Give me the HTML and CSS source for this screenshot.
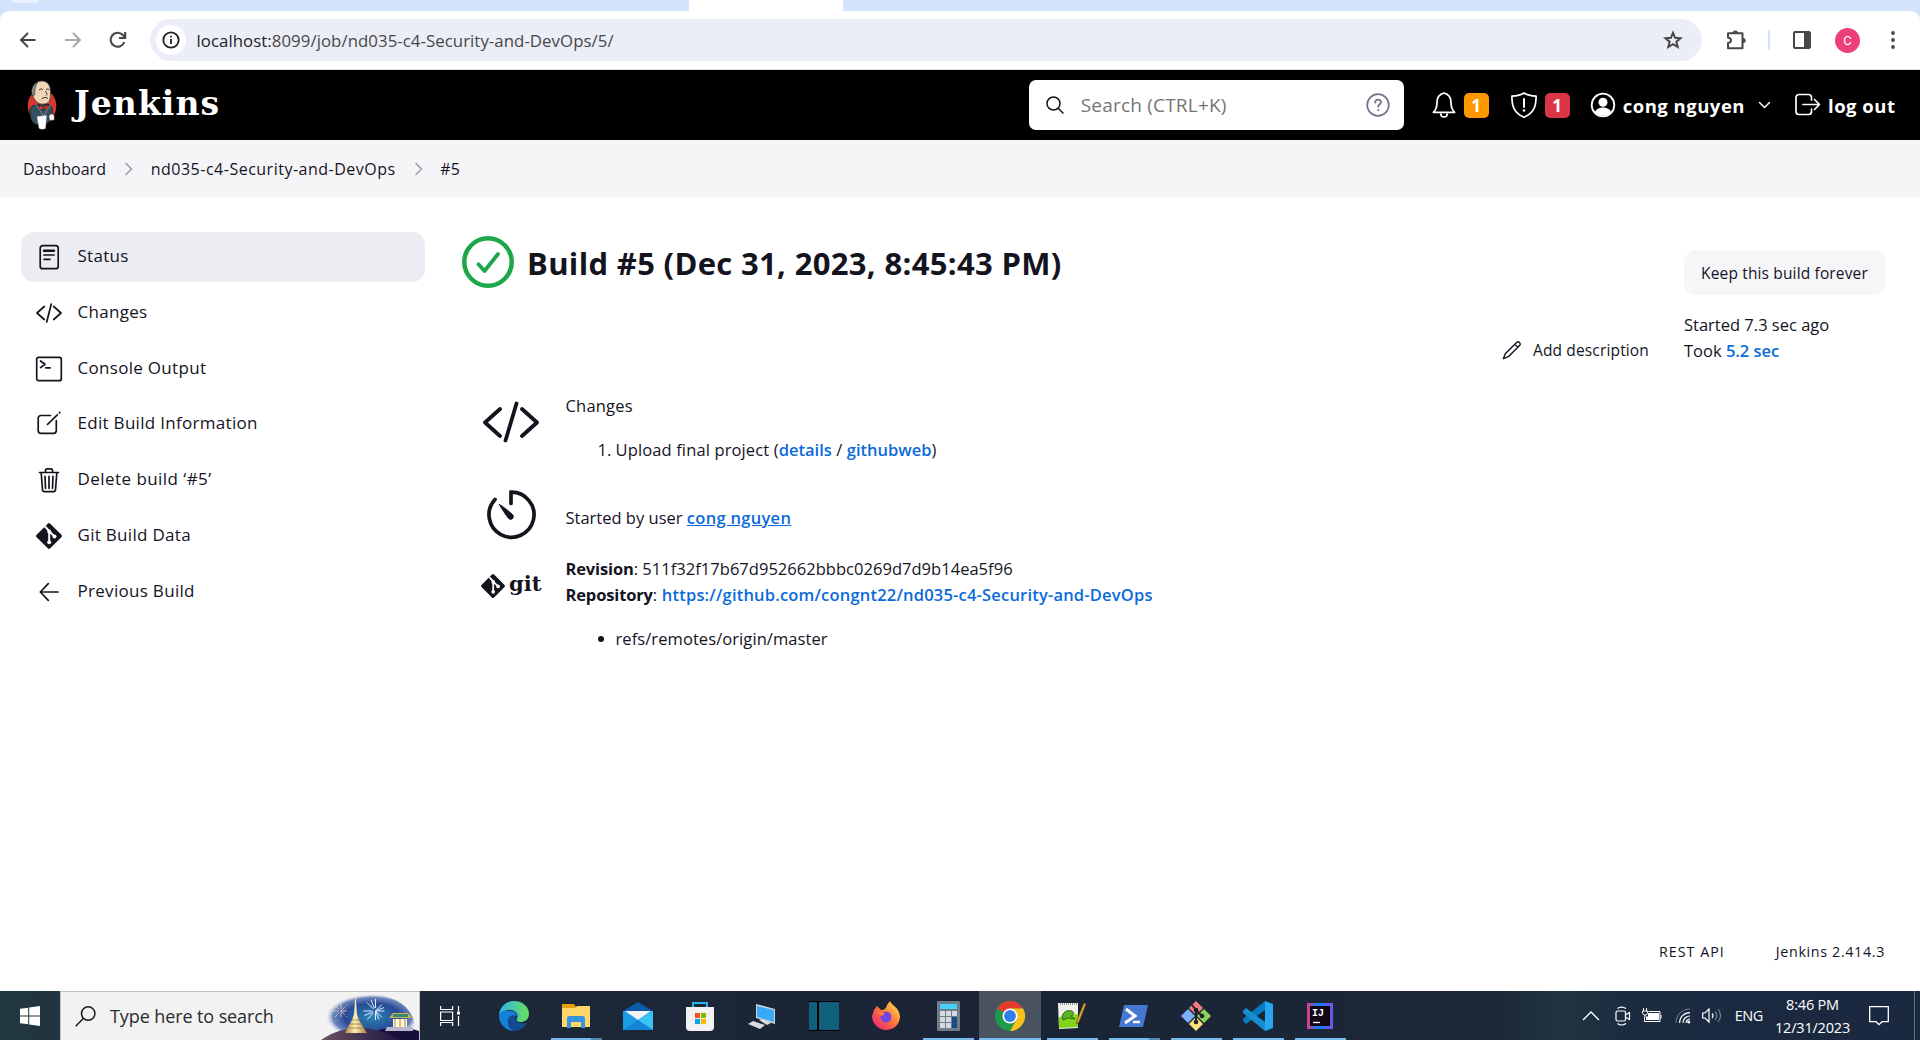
FILE: index.html
```html
<!DOCTYPE html>
<html lang="en">
<head>
<meta charset="utf-8">
<title>Build #5 - Jenkins</title>
<link rel="stylesheet" href="styles.css">
</head>
<body>
<div class="screen">
  <div class="tabstrip"><div class="tab-button"></div><div class="active-tab"></div></div>
  <div class="toolbar-back">
  <div class="toolbar">
    <svg class="nav-back" width="18" height="18" viewBox="0 0 18 18" fill="none" stroke="#474747" stroke-width="2"><path d="M16.500 9H2.500M9 2L2 9l7 7"/></svg>
    <svg class="nav-fwd" width="18" height="18" viewBox="0 0 18 18" fill="none" stroke="#a9a9a9" stroke-width="2"><path d="M1 9h14.500M9 2l7 7-7 7"/></svg>
    <svg class="nav-reload" width="18" height="18" viewBox="0 0 18 18" fill="none" stroke="#474747" stroke-width="2.100"><path d="M15.300 11A7 7 0 1 1 13.800 4L16 6.300M16.200 1v6H10"/></svg>
    <div class="omnibox">
      <span class="site-info"><svg width="18" height="18" viewBox="0 0 18 18" fill="none" stroke="#1f1f1f" stroke-width="1.800"><circle cx="9" cy="9" r="7.700"/><path d="M9 8v5M9 4.700v1.900"/></svg></span>
      <span class="url"><b>localhost:</b>8099/job/nd035-c4-Security-and-DevOps/5/</span>
      <svg class="star" width="20" height="20" viewBox="0 0 20 20" fill="none" stroke="#474747" stroke-width="2"><path d="M10 2.800l2.100 5 5.400.4-4.100 3.500 1.300 5.300L10 14.200 5.300 17l1.300-5.300L2.500 8.200l5.400-.4z"/></svg>
    </div>
    <svg class="ext" width="23" height="22" viewBox="0 0 23 22" fill="none" stroke="#474747" stroke-width="2"><path d="M3 4.200h14.500v15.100H3v-5.200c4-.8 4-5 0-5.700z" stroke-linejoin="round"/><path d="M7.500 3.600a3 2.600 0 0 1 5.600 0zM18 9.300a2.200 2.200 0 0 1 0 4.500z" fill="#474747" stroke-width="1"/></svg>
    <span class="divider"></span>
    <svg class="panel" width="20" height="20" viewBox="0 0 20 20"><rect x="2" y="2" width="16" height="16" rx="1" fill="none" stroke="#474747" stroke-width="2"/><path d="M12 2h6v16h-6z" fill="#474747"/></svg>
    <span class="avatar">C</span>
    <svg class="dots" width="4" height="18" viewBox="0 0 4 18" fill="#474747"><circle cx="2" cy="2" r="1.900"/><circle cx="2" cy="9" r="1.900"/><circle cx="2" cy="16" r="1.900"/></svg>
  </div>
  </div>

  <header class="header">
    <svg class="mascot" width="36" height="50" viewBox="-2 0 36 50">
      <ellipse cx="16" cy="26" rx="14.300" ry="16.500" fill="#d33833"/>
      <path d="M4 34c-1-6 1-8 6-9l12-.5c4 1 5 4 4 9l-2 8-5 3h-9c-4-2-5.500-5-6-10.500z" fill="#335061" stroke="#161616" stroke-width=".8"/>
      <path d="M6.500 14C6 5 10 1 16 1s9 5 8.500 13c0 7-2 10-7 10-5 1-10-4-11-10z" fill="#f0d6b7" stroke="#333" stroke-width=".7"/>
      <path d="M7 16C4 12 6 4 12 2 9 6 9 9 8.500 15z" fill="#8b8f92" stroke="#222" stroke-width=".6"/>
      <path d="M13 10c1.500-1.500 3-1.500 4 0M20 10c1-1.500 2.500-1.500 3.500 0M19.500 11c1.500 2.500 2 3.500.5 4.500M15.500 19c2-2 5-2 6.500-.5" fill="none" stroke="#333" stroke-width="1"/>
      <path d="M13 25l5 2 4-2.500v6l-4-2-5 2z" fill="#d33833" stroke="#161616" stroke-width=".6"/>
      <path d="M9.500 24l8 12 7-11" fill="none" stroke="#aeb9c2" stroke-width=".6"/>
      <path d="M11 36.500l9.500-1-1 13c-3 1-5.500 1-6.500-.5z" fill="#fff" stroke="#bbb" stroke-width=".5"/>
      <path d="M22.500 36c2-3 5-3 6 0v4l-5 1z" fill="#eee" stroke="#222" stroke-width=".8"/>
    </svg>
    <span class="brand">Jenkins</span>
    <div class="search">
      <svg width="18" height="18" viewBox="0 0 18 18" fill="none" stroke="#14141f" stroke-width="1.500" stroke-linecap="round"><circle cx="7.500" cy="7.500" r="6.500"/><path d="M12.200 12.200l4.800 4.800"/></svg>
      <span class="placeholder">Search (CTRL+K)</span>
      <svg class="help" width="24" height="24" viewBox="0 0 24 24" fill="none" stroke="#73738c" stroke-width="1.700" stroke-linecap="round"><circle cx="12" cy="12" r="10.800"/><path d="M9.200 9.500c0-4 5.800-3.600 5.800-.4 0 2-2.800 2.300-2.800 4.600" stroke-width="1.800"/><circle cx="12.200" cy="17" r=".6" fill="#73738c" stroke-width="1"/></svg>
    </div>
    <svg class="bell" width="24" height="28" viewBox="0 0 24 28" fill="none" stroke="#fff" stroke-width="1.700" stroke-linejoin="round"><path d="M12 2c-5.300 1.300-7 4.800-7 9.500 0 5-1 7.300-3.600 9.900h21.200C20 18.800 19 16.500 19 11.500 19 6.800 17.300 3.300 12 2zM8.600 22.500c.4 4.600 6.400 4.600 6.800 0"/></svg>
    <span class="badge orange">1</span>
    <svg class="shield" width="28" height="28" viewBox="0 0 28 28" fill="none" stroke="#fff" stroke-width="1.700" stroke-linejoin="round"><path d="M14 2C10.500 4.300 6.600 4.900 1.900 5.200c0 10 2 17 12.100 21.100C24 22.200 26.100 15.200 26.100 5.200 21.400 4.900 17.500 4.300 14 2z"/><path d="M14 8v8" stroke-width="2" stroke-linecap="round"/><circle cx="14" cy="19.500" r="1.300" fill="#fff" stroke="none"/></svg>
    <span class="badge red">1</span>
    <svg class="person" width="26" height="26" viewBox="0 0 26 26"><circle cx="13" cy="13" r="11.300" fill="none" stroke="#fff" stroke-width="1.800"/><circle cx="13" cy="10.300" r="4.500" fill="#fff"/><path d="M5 20c2-6 14-6 16 0-4 5-12 5-16 0z" fill="#fff"/></svg>
    <span class="user">cong nguyen</span>
    <svg class="chev" width="13" height="9" viewBox="0 0 13 9" fill="none" stroke="#fff" stroke-width="1.500" stroke-linecap="round"><path d="M1.500 1.500l5 5 5-5"/></svg>
    <svg class="exit" width="26" height="24" viewBox="0 0 26 24" fill="none" stroke="#fff" stroke-width="1.700" stroke-linecap="round" stroke-linejoin="round"><path d="M16.500 7V4.500a3 3 0 0 0-3-3H4a3 3 0 0 0-3 3v14a3 3 0 0 0 3 3h9.500a3 3 0 0 0 3-3V16M8 11.500h16M19.500 6.500l5 5-5 5"/></svg>
    <span class="logout">log out</span>
  </header>

  <nav class="crumbs">
    <span class="c1">Dashboard</span>
    <svg width="9" height="14" viewBox="0 0 9 14" fill="none" stroke="#9a9aad" stroke-width="1.500"><path d="M1.500 1l6 6-6 6"/></svg>
    <span class="c2">nd035-c4-Security-and-DevOps</span>
    <svg width="9" height="14" viewBox="0 0 9 14" fill="none" stroke="#9a9aad" stroke-width="1.500"><path d="M1.500 1l6 6-6 6"/></svg>
    <span class="c3">#5</span>
  </nav>

  <main class="page">
    <aside class="side">
      <a class="item active"><svg viewBox="0 0 28 28"><rect x="5.200" y="2.700" width="18" height="23" rx="2.500"/><path d="M9 7.700h10" stroke-width="2.400"/><path d="M9 12h10M9 16.300h6"/></svg><span class="s1">Status</span></a>
      <a class="item"><svg viewBox="0 0 28 28"><path d="M9.300 7.500L2 14l7.300 6.500M18.700 7.500L26 14l-7.300 6.500M16.300 5l-4.600 18"/></svg><span>Changes</span></a>
      <a class="item"><svg viewBox="0 0 28 28"><rect x="1.700" y="2.300" width="24.600" height="23.400" rx="2"/><path d="M5.500 6l4.500 3.300L5.500 12.600M10.800 12.800h4.400"/></svg><span class="s3">Console Output</span></a>
      <a class="item"><svg viewBox="0 0 28 28"><path d="M15.500 5.500H6a2.800 2.800 0 0 0-2.800 2.800V20.500A2.800 2.800 0 0 0 6 23.300h12.500a2.800 2.800 0 0 0 2.800-2.800V10.700M12.500 14.500L22.300 4.900M24.400 2.800l.4-.4"/></svg><span class="s4">Edit Build Information</span></a>
      <a class="item"><svg viewBox="0 0 28 28"><path d="M6.200 6.800l1.300 17a2 2 0 0 0 2 1.900h9a2 2 0 0 0 2-1.900l1.300-17M4.500 6.500h19M10.500 6.300V4.500a1.700 1.700 0 0 1 1.700-1.700h3.600a1.700 1.700 0 0 1 1.700 1.700v1.800M14 10.300v12M10 10.300l.5 12M18 10.300l-.5 12"/></svg><span class="s5">Delete build ‘#5’</span></a>
      <a class="item"><svg viewBox="0 0 28 28" class="solid"><rect x="4.400" y="4.400" width="19.200" height="19.200" rx="1.700" transform="rotate(45 14 14)" fill="#14141f"/><path d="M10 4.500l4.200 4.500v11.500M14.500 9.500l5 5" stroke="#fff" stroke-width="1.900"/><circle cx="14.200" cy="9.600" r="2" fill="#fff"/><circle cx="14.200" cy="20.300" r="2" fill="#fff"/><circle cx="19.500" cy="14.500" r="2" fill="#fff"/></svg><span>Git Build Data</span></a>
      <a class="item"><svg viewBox="0 0 28 28"><path d="M13.300 5.700L5.300 14l8 8.300M6 14h17"/></svg><span class="s7">Previous Build</span></a>
    </aside>

    <section class="content">
      <div class="heading">
        <svg width="52" height="52" viewBox="0 0 52 52" fill="none" stroke="#1ea64b" stroke-width="4.500"><circle cx="26" cy="26" r="23.700"/><path d="M16.500 28.300l6 6.700L36 18" stroke-width="3.800" stroke-linecap="round" stroke-linejoin="round"/></svg>
        <h1>Build #5 (Dec 31, 2023, 8:45:43 PM)</h1>
      </div>
      <div class="details">
        <svg class="ico-code" width="60" height="60" viewBox="0 0 60 60" fill="none" stroke="#14141f" stroke-width="3.800" stroke-linecap="round" stroke-linejoin="round"><path d="M19 16L4 29.500 19 43M41 16l15 13.500L41 43M35.500 10.500l-11 37"/></svg>
        <div class="cell changes"><p class="ch">Changes</p><p class="li"><span class="num">1.</span><span class="upl">Upload final project (<a>details</a> / <a>githubweb</a>)</span></p></div>
        <svg class="ico-clock" width="52" height="52" viewBox="0 0 52 52" fill="none" stroke="#14141f" stroke-width="3.700" stroke-linecap="round"><path d="M26 14.500V3.200a22.500 22.500 0 1 1-16 7.200"/><path d="M14.500 15.500c3 1.500 9.500 7 13 10 2.500 2.800-1 6.500-3.800 4-3-3.500-7.700-11-9.200-14z" fill="#14141f" stroke-width="1"/></svg>
        <div class="cell started"><p class="st">Started by user <a class="ul">cong nguyen</a></p></div>
        <div class="gitlogo"><svg width="26" height="26" viewBox="0 0 28 28"><rect x="4.400" y="4.400" width="19.200" height="19.200" rx="1.700" transform="rotate(45 14 14)" fill="#14141f"/><path d="M10 4.500l4.200 4.500v11.500M14.500 9.500l5 5" stroke="#fff" stroke-width="1.900" fill="none"/><circle cx="14.200" cy="9.600" r="2" fill="#fff"/><circle cx="14.200" cy="20.300" r="2" fill="#fff"/><circle cx="19.500" cy="14.500" r="2" fill="#fff"/></svg><span>git</span></div>
        <div class="cell git"><p class="rev"><b>Revision</b>: 511f32f17b67d952662bbbc0269d7d9b14ea5f96</p><p class="rep"><b>Repository</b>: <a>https://github.com/congnt22/nd035-c4-Security-and-DevOps</a></p><p class="li refs"><i class="bullet"></i><span class="ref">refs/remotes/origin/master</span></p></div>
      </div>
    </section>

    <div class="adddesc"><svg width="20" height="20" viewBox="0 0 20 20" fill="none" stroke="#14141f" stroke-width="1.400" stroke-linejoin="round"><path d="M14.800 2.200c1.600-1.600 4.600 1.200 3 3L6.300 16.700 1.300 18.700l2-5zM12.800 4.200l3 3"/></svg><span>Add description</span></div>
    <aside class="info">
      <button class="keep"><span>Keep this build forever</span></button>
      <p class="ago">Started 7.3 sec ago</p>
      <p class="took">Took <a>5.2 sec</a></p>
    </aside>
  </main>

  <footer class="footer"><span class="rest">REST API</span><span class="ver">Jenkins 2.414.3</span></footer>

  <div class="taskbar">
    <div class="start"><svg width="20" height="20" viewBox="0 0 20 20" fill="#fff"><path d="M0 2.800L8.200 1.700v7.800H0zM9.200 1.500L20 0v9.500H9.200zM0 10.500h8.200v7.800L0 17.200zM9.200 10.500H20V20L9.200 18.500z"/></svg></div>
    <div class="winsearch">
      <svg class="mag" width="21" height="21" viewBox="0 0 21 21" fill="none" stroke="#1a1a1a" stroke-width="1.500"><circle cx="13.200" cy="7.500" r="6.700"/><path d="M8.500 12.300L.7 20.300"/></svg>
      <span class="type">Type here to search</span>
      <svg class="scene" width="98" height="48" viewBox="0 0 98 48">
        <defs>
          <radialGradient id="sky"><stop offset="0" stop-color="#2a86b5"/><stop offset=".6" stop-color="#284a94"/><stop offset=".85" stop-color="#5474b4" stop-opacity=".85"/><stop offset="1" stop-color="#c9d4e8" stop-opacity="0"/></radialGradient>
          <linearGradient id="gold"><stop offset="0" stop-color="#b58a45"/><stop offset=".45" stop-color="#fff0b5"/><stop offset="1" stop-color="#a6783d"/></linearGradient>
          <linearGradient id="hill"><stop offset="0" stop-color="#6d5260"/><stop offset="1" stop-color="#1b1442"/></linearGradient>
        </defs>
        <path d="M5 28C5 10 22 2 46 2s45 10 48 32l4 14H12z" fill="url(#sky)"/>
        <path d="M48 42c16-8 34-8 50-3v9H48z" fill="#170e3c"/>
        <path d="M0 48c22-15 50-17 80 0z" fill="url(#hill)"/>
        <path d="M34.500 2l1.500 20 2 6 4 7 4 6H24l3-6 4-7 2-6z" fill="url(#gold)"/>
        <path d="M31 28h8M29 32h13M27 36h17" stroke="#9a7337" stroke-width=".8"/>
        <g stroke="#dfeaff" stroke-width="1" stroke-dasharray="9 3"><path d="M54.500 7v24M42.500 19h24M46 10.500l17 17M46 27.500l17-17M50 8l9 22M43.500 23.500l22-9"/></g>
        <g stroke="#e7c4bd" stroke-width=".8" stroke-dasharray="6 2"><path d="M20 11v16M12 19h16M14 13l12 12M14 25l12-12"/></g>
        <path d="M68 26l4-5h15l4 5z" fill="#d5ad54"/><path d="M72 23.500h15" stroke="#358b70" stroke-width="3"/><path d="M72 27h14v8H72z" fill="#fff5d9"/><path d="M74 27v8M79 27v8M84 27v8" stroke="#b8843e"/><path d="M66 35h26v4H64z" fill="#b8b8ca"/>
      </svg>
    </div>
    <div class="tv"><svg width="20" height="20" viewBox="0 0 20 20" fill="none" stroke="#fff" stroke-width="1.200"><path d="M.6 0v3.500h12V0M.6 6h12v8.500H.6zM.6 20v-3.500h12V20M18.500 0v5M18.500 10v10"/><path d="M17 5.500h3v3h-3z" fill="#fff" stroke="none"/></svg></div>
    <div class="apps">
      <div class="app"><svg viewBox="0 0 30 30"><defs><linearGradient id="eg"><stop stop-color="#2bb4ef"/><stop offset="1" stop-color="#67e05a"/></linearGradient></defs><path d="M0 14a15 15 0 0 0 28 8c-2 1-6 2-9 1-4-1-5-4-3-8z" fill="#1174c9"/><path d="M0 14C1 5 8 0 15 0c9 0 15 6 15 13 0 5-4 8-8 8-5 0-5-2-4-4 2-3-1-8-7-8-5 0-9 2-11 5z" fill="url(#eg)"/><path d="M0 14c2-4 8-5 12-4 4 0 6 3 6 5-4-1-9 1-9 6 0 4 3 8 6 9C7 30 0 23 0 14z" fill="#1480d8"/><path d="M9 18c1-3 5-5 8-3-3 5 4 9 11 7-3 5-9 8-14 8-4-2-6-7-5-12z" fill="#144a91"/></svg></div>
      <div class="app open multi"><svg viewBox="0 0 30 30"><path d="M1 3h12l2 3h14v6H1z" fill="#e5a10d"/><path d="M1 7h13l2-2h13v21H1z" fill="#ffd768"/><path d="M6 27V17q0-2 2-2h14q2 0 2 2v10h-4v-6H10v6z" fill="#3793e0"/></svg></div>
      <div class="app"><svg viewBox="0 0 30 30"><path d="M0 10L15 1l15 9z" fill="#0c59a8"/><path d="M0 10h30v19H0z" fill="#1a9ce5"/><path d="M2 10h26L15 19z" fill="#f2f4f5"/><path d="M15 19l15-9v19z" fill="#38c5f4"/><path d="M0 29l15-10 15 10z" fill="#1585d8"/></svg></div>
      <div class="app"><svg viewBox="0 0 30 30"><path d="M8 7V2h14v5" fill="none" stroke="#29b6ee" stroke-width="2"/><path d="M1 6h28v20q0 4-4 4H5q-4 0-4-4z" fill="#f1f1f1"/><path d="M10 12h5v5h-5z" fill="#f25022"/><path d="M16 12h5v5h-5z" fill="#7fba00"/><path d="M10 18h5v5h-5z" fill="#00a4ef"/><path d="M16 18h5v5h-5z" fill="#ffb900"/></svg></div>
      <div class="app"><svg viewBox="0 0 30 30"><path d="M9 3l19 5v15l-19-6z" fill="#cfd4d8"/><path d="M10 5l17 4v12l-17-5z" fill="#38a9f5"/><path d="M1 23l5-3 12 4-5 4zM12 19l4-1 8 4-4 2z" fill="#d8dce0"/></svg></div>
      <div class="app"><svg viewBox="0 0 30 30"><path d="M0 0h30v30H0z" fill="#11607b"/><path d="M8 0h2v30H8zM0 0h30v1H0zM0 29h30v1H0z" fill="#000"/></svg></div>
      <div class="app"><svg viewBox="0 0 30 30"><defs><linearGradient id="ff" x1="1" x2="0" y1="0" y2="1"><stop stop-color="#fff44f"/><stop offset=".5" stop-color="#ff7139"/><stop offset="1" stop-color="#e31587"/></linearGradient></defs><path d="M3 9l3-4 4 4c3 0 5-1 6-5l3-4c1 4 9 6 10 15 0 9-7 14-14 14S1 23 1 15z" fill="url(#ff)"/><circle cx="15" cy="16" r="5.500" fill="#7542e5"/><path d="M6 11l8 1-3 3z" fill="#ff8a25"/></svg></div>
      <div class="app open"><svg viewBox="0 0 30 30"><rect x="4" width="23" height="30" rx="1" fill="#707d87"/><path d="M7 3h17v5H7z" fill="#44d1fa"/><g fill="#d3dae2"><path d="M7 10h5v5H7zM13 10h5v5h-5zM19 10h5v5h-5zM7 16h5v5H7zM13 16h5v5h-5zM7 22h5v5H7zM13 22h5v5h-5z"/></g><path d="M19 16h5v11h-5z" fill="#174a86"/></svg></div>
      <div class="app open current"><svg viewBox="0 0 30 30"><circle cx="15" cy="15" r="15" fill="#219b4b"/><path d="M15 15L2 7.500A15 15 0 0 1 28 7.500H15z" fill="#e33b2e"/><path d="M15 7.500h13A15 15 0 0 1 15 30l6.500-11.300z" fill="#fbc11b"/><circle cx="15" cy="15" r="7.500" fill="#fff"/><circle cx="15" cy="15" r="5.900" fill="#2e7de9"/></svg></div>
      <div class="app open"><svg viewBox="0 0 30 30"><path d="M1 2h20v25L2 28z" fill="#f2f2e8"/><path d="M2 16q9-1 19-3v13L2 27z" fill="#80d51b"/><path d="M5 15q3-7 10-5 4 3-1 5l4 3-7-1-5 2z" fill="#58b522" stroke="#243a18" stroke-width=".7"/><path d="M27 2l2 1-7 18-3 2 1-4z" fill="#e6a72e" stroke="#624412" stroke-width=".6"/><path d="M3 3h17" stroke="#999" stroke-dasharray="1 1" stroke-width="2"/></svg></div>
      <div class="app open multi"><svg viewBox="0 0 30 30"><path d="M5 4h24l-5 22H0z" fill="#4478d3"/><path d="M7 8l9 7-10 7" fill="none" stroke="#fff" stroke-width="3"/><path d="M14 21h7" stroke="#fff" stroke-width="2.500"/></svg></div>
      <div class="app open"><svg viewBox="0 0 30 30"><path d="M15 0l7 7-7 7-7-7z" fill="#f47b80"/><path d="M23 8l7 7-7 7-7-7z" fill="#8bd35a"/><path d="M7 8l7 7-7 7-7-7z" fill="#7db0fb"/><path d="M15 16l7 7-7 7-7-7z" fill="#ffe27d"/><path d="M11 4l4 5v12M15 9l6 6" fill="none" stroke="#1d2329" stroke-width="2"/><g fill="#1d2329"><circle cx="15" cy="9" r="2.300"/><circle cx="15" cy="21" r="2.300"/><circle cx="21" cy="15" r="2.300"/></g></svg></div>
      <div class="app open"><svg viewBox="0 0 30 30"><path d="M22 0v9L3 23l-3-3v-2z" fill="#087bc0"/><path d="M0 12v-2l3-3 19 14v9z" fill="#168ed1"/><path d="M22 0l8 3v24l-8 3z" fill="#27a7f1"/></svg></div>
      <div class="app open"><svg viewBox="0 0 30 30"><defs><linearGradient id="ij"><stop stop-color="#e8397d"/><stop offset=".4" stop-color="#087cfa"/><stop offset="1" stop-color="#7650e8"/></linearGradient></defs><path d="M2 2h26v26H2z" fill="url(#ij)"/><path d="M5 5h20v20H5z" fill="#120616"/><path d="M8 21.500h7" stroke="#fff" stroke-width="1.300"/><text x="7" y="15" class="ijtext">IJ</text></svg></div>
    </div>
    <div class="tray">
      <svg class="up" width="18" height="10" viewBox="0 0 18 10" fill="none" stroke="#fff" stroke-width="1.400"><path d="M1 9l8-8 8 8"/></svg>
      <svg class="cam" width="16" height="20" viewBox="0 0 16 20" fill="none" stroke="#fff" stroke-width="1.200"><rect x="1" y="5" width="9.500" height="10" rx="1.500"/><path d="M11 8.500l3.500-2v7l-3.500-2M2.500 2.600q4-3 8.500 0M2.500 17.500q4 3 8.500 0"/></svg>
      <svg class="bat" width="20" height="15" viewBox="0 0 20 15"><path d="M6 5h11v7H4V8.500h2z" fill="#fff"/><path d="M6.500 3.500h11.500v10H2.500V9M19 7v3.500M1.500 0v3M4.500 0v3M.6 3h5v2.500l-1.500 1.500h-2L.6 5.500zM3 7v2" stroke="#fff" fill="none"/></svg>
      <svg class="wifi" width="16" height="16" viewBox="0 0 16 16" fill="none"><path d="M1 15C1 7 7 1 15 1" stroke="#77808b"/><path d="M4.500 15C4.500 9 9 4.700 15 4.700M8 15c0-4 3-7 7-7M11 15c0-2 2-4 4-4" stroke="#fff" stroke-width="1.200"/><circle cx="13.800" cy="14" r="1.500" fill="#fff"/></svg>
      <svg class="vol" width="20" height="18" viewBox="0 0 20 18" fill="none" stroke="#fff" stroke-width="1.200"><path d="M.7 6H3l4-4v13l-4-4H.7zM10 6.500q2 2.300 0 4.500"/><path d="M13 4.500q3.500 4 0 8.500M16 2q5 6.500 0 13" stroke="#75808d"/></svg>
      <span class="eng">ENG</span>
      <div class="clock"><span class="time">8:46 PM</span><span class="date">12/31/2023</span></div>
      <svg class="note" width="20" height="20" viewBox="0 0 20 20" fill="none" stroke="#fff" stroke-width="1.300"><path d="M.7.700h18.600v15H13l-3 3-3-3H.7z"/></svg>
      <span class="peek"></span>
    </div>
  </div>
</div>
</body>
</html>
```
FILE: styles.css
```css
* { box-sizing: border-box; }
body { margin: 0; font-family: "Open Sans", "Noto Sans", sans-serif; color: #14141f; background: #fff; white-space: nowrap; }
p, h1 { margin: 0; }
a { color: #0b6adb; font-weight: 600; text-decoration: none; }
svg { display: block; flex: none; }
.screen { width: 1920px; height: 1040px; overflow: hidden; display: flex; flex-direction: column; }

/* Browser chrome */
.tabstrip { height: 11px; flex: none; background: #d3e2fd; display: flex; }
.tab-button { width: 27px; height: 3px; margin-left: 12px; border-radius: 0 0 12px 12px; background: #eaf1fe; }
.active-tab { width: 154px; height: 11px; margin-left: 650px; background: #fff; }
.toolbar-back { height: 59px; flex: none; background: #d3e2fd; }
.toolbar { height: 59px; background: #fff; border-radius: 9px 9px 0 0; border-bottom: 1px solid #dcdcdc; display: flex; align-items: center; padding-left: 19px; }
.nav-fwd { margin-left: 27px; }
.nav-reload { margin-left: 27px; }
.omnibox { width: 1552px; height: 42px; margin-left: 23px; border-radius: 21px; background: #ebeef7; display: flex; align-items: center; }
.site-info { width: 30px; height: 30px; margin-left: 6px; border-radius: 50%; background: #fff; display: grid; place-items: center; }
.url { margin-left: 10.500px; font-size: 16.800px; letter-spacing: .06px; color: #474747; }
.url b { font-weight: 400; color: #1f1f1f; }
.star { margin: 0 19px 0 auto; }
.ext { margin-left: 23px; }
.divider { width: 2px; height: 20px; margin-left: 20px; background: #d3e2fd; }
.panel { margin-left: 22px; }
.avatar { width: 25px; height: 25px; margin-left: 23px; border-radius: 50%; background: #ec407a; color: #fff; font: 13px/25px Roboto, sans-serif; text-align: center; }
.dots { margin-left: 31px; }

/* Jenkins header */
.header { height: 70px; flex: none; background: #000; color: #fff; display: flex; align-items: center; padding-left: 24px; }
.brand { margin-left: 14px; padding-bottom: 2px; font: bold 33px/40px "DejaVu Serif", serif; letter-spacing: 1.100px; }
.search { width: 375px; height: 50px; margin-left: auto; border-radius: 7px; background: #fff; display: flex; align-items: center; padding: 0 14px 0 17px; }
.placeholder { margin-left: 17px; font-size: 19px; letter-spacing: .2px; color: #757575; }
.help { margin-left: auto; }
.bell { margin-left: 28px; }
.badge { width: 25px; height: 25px; margin-left: 8px; border-radius: 5px; font: bold 17px/25px "Open Sans", sans-serif; text-align: center; }
.orange { background: #ff9800; }
.red { background: #dc3545; margin-left: 7px; }
.shield { margin-left: 21px; }
.person { margin-left: 20.500px; }
.user, .logout { font-size: 18.500px; font-weight: 700; letter-spacing: .5px; }
.user { margin-left: 6.500px; }
.chev { margin-left: 13px; }
.exit { margin-left: 24px; }
.logout { margin: 0 24.500px 0 7px; }

.crumbs { height: 57px; flex: none; background: #f5f5f8; display: flex; align-items: center; padding-left: 23px; font-size: 16px; font-weight: 500; }
.crumbs svg { margin: 0 17.700px 0 18px; }
.c1 { letter-spacing: .050px; }
.c2 { letter-spacing: .500px; }

/* Page */
.page { flex: 1; display: flex; align-items: flex-start; padding: 35px 35px 0 21px; }
.side { width: 404px; display: flex; flex-direction: column; gap: 5.800px; }
.item { height: 50px; border-radius: 13px; display: flex; align-items: center; padding-left: 14px; gap: 14.500px; font-size: 17px; letter-spacing: .3px; font-weight: 500; color: #14141f; }
.item span { padding-bottom: 3px; }
.s5 { letter-spacing: .450px; }
.item svg { width: 28px; height: 28px; fill: none; stroke: #14141f; stroke-width: 1.700; stroke-linecap: round; stroke-linejoin: round; }
.item .solid { stroke: none; }
.active { background: #ecedf3; }
.content { margin-left: 37px; }
.heading { display: flex; align-items: center; gap: 13px; height: 60px; }
h1 { padding-top: 1px; font-size: 31px; font-weight: 700; line-height: 40px; letter-spacing: .330px; }
.details { display: grid; grid-template-columns: 103.500px auto; padding: 101px 0 0 0; font-size: 16.500px; line-height: 26px; font-weight: 400; }
.details b { font-weight: 700; letter-spacing: -.150px; }
.ico-code { margin: 0 0 0 19px; }
.ico-clock { margin-left: 23px; }
.changes { height: 96px; }
.ch { margin-bottom: 18px; letter-spacing: .2px; }
.li { display: flex; padding-left: 32px; }
.num { width: 18px; }
.upl { letter-spacing: .130px; }
.upl a { letter-spacing: 0; }
.ul { text-decoration: underline; letter-spacing: .3px; }
.started { height: 67px; padding-top: 16px; }
.gitlogo { display: flex; align-items: center; margin: 17px 0 0 18px; height: 26px; gap: 3px; font: bold 21px/22px "DejaVu Serif", serif; }
.gitlogo span { padding-bottom: 4px; }
.rev { letter-spacing: .030px; }
.rep { letter-spacing: .190px; }
.refs { margin-top: 18px; align-items: center; letter-spacing: .080px; }
.bullet { width: 6px; height: 6px; margin-right: 12px; border-radius: 50%; background: #14141f; }
.adddesc { margin: 107px 35px 0 auto; display: flex; align-items: center; gap: 11px; font-size: 15.500px; letter-spacing: .150px; font-weight: 500; line-height: 22px; }
.info { width: 201px; padding-top: 18px; font-size: 16.500px; line-height: 26px; font-weight: 400; }
.keep { width: 201px; height: 45px; margin: 0 0 17px; padding: 0; border: 0; border-radius: 12px; background: #f6f6f9; color: #14141f; display: block; font: 500 15.500px/22px "Open Sans", sans-serif; letter-spacing: .150px; }
.footer { height: 76px; flex: none; display: flex; justify-content: flex-end; gap: 51px; padding: 25px 35px 0 0; font-size: 14.300px; line-height: 24px; font-weight: 500; }
.rest { letter-spacing: 1px; }
.ver { letter-spacing: .650px; }

/* Windows taskbar */
.taskbar { height: 49px; flex: none; display: flex; color: #fff; background: linear-gradient(90deg, #213740 0, #1d2838 400px, #1a2436 1000px, #1b2837 1500px, #213440 1560px, #1b2b40 1630px, #1a2840 1920px); }
.start { width: 60px; display: grid; place-items: center; }
.winsearch { width: 360px; background: #f2f2f2; border: 1px solid #c0c0c0; border-bottom: 0; display: flex; align-items: center; padding-left: 14px; }
.type { margin-left: 14px; font-size: 18px; letter-spacing: -.100px; color: #2b2b2b; }
.scene { margin-left: auto; }
.tv { width: 63px; display: grid; place-items: center; padding-right: 3px; }
.apps { display: flex; }
.app { width: 62px; height: 49px; display: grid; justify-items: center; align-items: center; position: relative; }
.app svg { width: 30px; height: 30px; }
.open::after { content: ""; position: absolute; left: 6px; bottom: 0; width: 51px; height: 2px; background: #76b9ed; }
.multi::after { background: linear-gradient(90deg, #76b9ed 40px, #5586ae 40px); }
.current { background: #48535f; }
.current::after { left: 0; width: 62px; }
.ijtext { font: bold 10px "Liberation Mono", monospace; fill: #fff; }
.tray { margin-left: auto; display: flex; align-items: center; }
.up { margin-right: 3px; }
.cam { margin-left: 12px; }
.bat { margin-left: 11px; }
.wifi { margin-left: 13px; }
.vol { margin-left: 11px; }
.eng { margin-left: 13px; font-size: 14.500px; letter-spacing: -.4px; }
.clock { width: 75px; margin-left: 12px; display: flex; flex-direction: column; align-items: center; font-size: 14.500px; line-height: 23px; letter-spacing: -.2px; }
.note { margin-left: 19px; }
.peek { width: 1px; height: 49px; margin: 0 5px 0 25px; background: #68717e; }
```
